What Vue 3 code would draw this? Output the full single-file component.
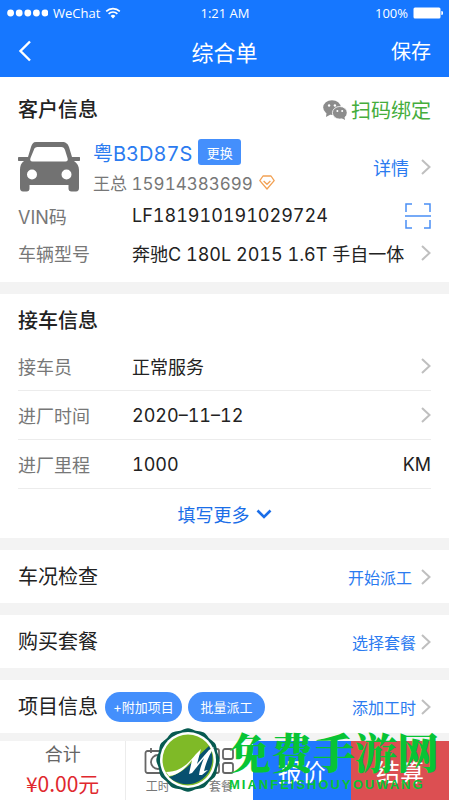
<template>
  <div class="page">
    <header class="header">
      <div class="status-bar">
        <div class="status-left">
          <svg class="signal" viewBox="0 0 41 8">
            <circle v-for="n in 5" :key="n" :cx="n * 8.6 - 5" cy="4" r="3.4" fill="#fff" />
          </svg>
          <span>WeChat</span>
          <svg class="wifi" viewBox="0 0 16 12" fill="none" stroke="#fff" stroke-width="1.6">
            <path d="M1.2 4.4a9.6 9.6 0 0 1 13.6 0" />
            <path d="M3.6 6.9a6.2 6.2 0 0 1 8.8 0" />
            <path d="M8 11.4L5.6 9a3.4 3.4 0 0 1 4.8 0z" fill="#fff" stroke="none" />
          </svg>
        </div>
        <span>1:21 AM</span>
        <div class="status-right">
          <span>100%</span>
          <svg class="battery" viewBox="0 0 30 12" fill="#fff">
            <rect x="0.5" y="0.5" width="27" height="11" rx="1.5" />
            <path d="M28.3 4v4a2 2 0 0 0 0-4z" />
          </svg>
        </div>
      </div>
      <div class="nav-bar">
        <button class="back" type="button" aria-label="返回">
          <svg viewBox="0 0 14 22" fill="none" stroke="#fff" stroke-width="2.4">
            <path d="M12 1.5L2.5 11l9.5 9.5" />
          </svg>
        </button>
        <h1>综合单</h1>
        <button class="save" type="button">保存</button>
      </div>
    </header>

    <main class="content">
      <section class="card customer">
        <div class="card-head">
          <h2>客户信息</h2>
          <button class="bind" type="button">
            <svg viewBox="0 0 24 20">
              <ellipse cx="9" cy="7.6" rx="8.8" ry="7.4" fill="#8c8c8c" />
              <path d="M3.6 12.4L3 17l4.6-2.4z" fill="#8c8c8c" />
              <circle cx="6.1" cy="5.5" r="1.2" fill="#fff" />
              <circle cx="11.9" cy="5.5" r="1.2" fill="#fff" />
              <ellipse cx="16.8" cy="12.8" rx="7.4" ry="6.3" fill="#8c8c8c" stroke="#fff" stroke-width="0.8" />
              <path d="M18.4 18l3.7 2-.8-3.6z" fill="#8c8c8c" />
              <circle cx="14.4" cy="11" r="1" fill="#fff" />
              <circle cx="19.2" cy="11" r="1" fill="#fff" />
            </svg>
            <span>扫码绑定</span>
          </button>
        </div>

        <div class="vehicle">
          <svg class="car" viewBox="0 0 62 50">
            <path
              fill="#727272"
              fill-rule="evenodd"
              d="M18 0h26c4 0 6 2 7 5l3 10h7c1 0 1 .6 1 1v2c0 .7-.3 1-1 1h-5c3 2 5 5 5 9v18c0 2-1 3.500-3 3.500h-4.500c-2 0-3-1-3-3V43h-39v3.500c0 2-1 3-3 3H5c-2 0-3-1.500-3-3.500V28c0-4 1-7 4-9H1c-.7 0-1-.3-1-1v-2c0-.4.300-1 1-1h9l3-10c1-3 2-5 5-5zM19.500 5c-2 0-3 .8-3.700 3L12.500 16c-.8 2 0 3.500 2 3.500h33c2 0 2.800-1.500 2-3.500L47 8c-.7-2-1.700-3-3.700-3zM14 27.500a5 5 0 1 0 0 10 5 5 0 0 0 0-10zM48.500 27.500a5 5 0 1 0 0 10 5 5 0 0 0 0-10z"
            />
          </svg>
          <div class="vehicle-info">
            <div class="plate">
              <strong>粤B3D87S</strong>
              <button class="swap" type="button">更换</button>
            </div>
            <div class="owner">
              <span>王总 15914383699</span>
              <svg viewBox="0 0 16 15" fill="none" stroke="#f2a154" stroke-width="1.300" stroke-linejoin="round">
                <path d="M4 1h8l3.200 4.600L8 14 .8 5.600z" />
                <path d="M4.600 6L8 9.200 11.400 6" />
              </svg>
            </div>
          </div>
          <a class="link detail" href="#">
            <span>详情</span>
            <svg class="arrow" viewBox="0 0 10 16"><path d="M1 1l7.500 7L1 15" /></svg>
          </a>
        </div>

        <div class="row short">
          <label for="vin">VIN码</label>
          <input id="vin" v-model="vin" type="text" />
          <button class="scan" type="button" aria-label="扫描">
            <svg viewBox="0 0 26 26" fill="none" stroke="#4a8ff5" stroke-width="1.500">
              <path d="M1 9V1h6M19 1h6v8M1 17v8h6M19 25h6v-8M0 13h26" />
            </svg>
          </button>
        </div>
        <button class="row short" type="button">
          <span class="label">车辆型号</span>
          <span class="value">奔驰C 180L 2015 1.6T 手自一体</span>
          <svg class="arrow" viewBox="0 0 10 16"><path d="M1 1l7.500 7L1 15" /></svg>
        </button>
      </section>

      <section class="card reception">
        <div class="card-head">
          <h2>接车信息</h2>
        </div>
        <button v-for="item in reception" :key="item.label" class="row lined" type="button">
          <span class="label">{{ item.label }}</span>
          <span class="value">{{ item.value }}</span>
          <svg class="arrow" viewBox="0 0 10 16"><path d="M1 1l7.500 7L1 15" /></svg>
        </button>
        <div class="row lined">
          <label for="mileage">进厂里程</label>
          <input id="mileage" v-model="mileage" type="text" inputmode="numeric" />
          <span>KM</span>
        </div>
        <button class="more" type="button">
          <span>填写更多</span>
          <svg viewBox="0 0 16 10" fill="none" stroke="#1a6ee8" stroke-width="2.600">
            <path d="M1.500 1.500L8 8l6.500-6.500" />
          </svg>
        </button>
      </section>

      <section v-for="entry in entries" :key="entry.title" class="card entry">
        <h2>{{ entry.title }}</h2>
        <div class="tags">
          <button v-for="tag in entry.tags" :key="tag" class="tag" type="button">{{ tag }}</button>
        </div>
        <a class="link" :class="{ spaced: entry.spaced }" href="#">
          <span>{{ entry.action }}</span>
          <svg class="arrow" viewBox="0 0 10 16"><path d="M1 1l7.500 7L1 15" /></svg>
        </a>
      </section>
    </main>

    <footer class="footer">
      <div class="total">
        <span>合计</span>
        <span class="price">¥0.00元</span>
      </div>
      <div class="shortcuts">
        <button type="button">
          <svg viewBox="0 0 28 28" fill="none" stroke="#666" stroke-width="1.800">
            <rect x="1.500" y="4" width="25" height="22" rx="2" />
            <path d="M7 1v5M21 1v5" />
            <circle cx="14" cy="15" r="7" />
            <path d="M14 11v4h4" />
          </svg>
          <span>工时</span>
        </button>
        <button type="button">
          <svg viewBox="0 0 28 28" fill="none" stroke="#666" stroke-width="1.800">
            <rect x="2" y="2" width="10" height="10" rx="2" />
            <rect x="16" y="2" width="10" height="10" rx="2" />
            <rect x="2" y="16" width="10" height="10" rx="2" />
            <rect x="16" y="16" width="10" height="10" rx="2" />
          </svg>
          <span>套餐</span>
        </button>
      </div>
      <button class="action quote" type="button">报价</button>
      <button class="action settle" type="button">结算</button>

      <div class="watermark">
        <svg class="badge" viewBox="0 0 64 64">
          <path :d="badgeEdge" fill="#075a50" />
          <circle cx="32" cy="32" r="28" fill="#fff" />
          <circle cx="32" cy="32" r="25.500" fill="#7fba27" />
          <path d="M13 48.900C29 45 38 31 53 18a25.500 25.500 0 0 1-40 30.900z" fill="#07506f" />
          <path
            d="M10 44c14 0 22-8 30-18l5-5-4 15 12-14 5-3c-4 7-8 15-10 24l4-1-6 5-3 0c1-7 3-12 5-17L36 45l-3 1 3-14c-6 8-13 15-23 16z"
            fill="#fff"
          />
        </svg>
        <div class="brand">
          <span class="brand-name">免费手游网</span>
          <span class="brand-latin">MIANFEISHOUYOUWANG</span>
        </div>
      </div>
    </footer>
  </div>
</template>

<script setup>
import { ref } from 'vue'

const vin = ref('LF181910191029724')
const mileage = ref('1000')

const reception = [
  { label: '接车员', value: '正常服务' },
  { label: '进厂时间', value: '2020–11–12' }
]

const entries = [
  { title: '车况检查', action: '开始派工', tags: [], spaced: true },
  { title: '购买套餐', action: '选择套餐', tags: [] },
  { title: '项目信息', action: '添加工时', tags: ['+附加项目', '批量派工'] }
]

// scalloped outline of the badge
const points = Array.from({ length: 120 }, (_, i) => {
  const angle = (i / 120) * Math.PI * 2
  const r = 31 + Math.cos(angle * 12) * 0.7
  return `${(32 + r * Math.cos(angle)).toFixed(1)} ${(32 + r * Math.sin(angle)).toFixed(1)}`
})
const badgeEdge = `M${points.join('L')}z`
</script>

<style>
body {
  margin: 0;
  background: #f3f3f3;
}
</style>

<style scoped>
.page {
  display: flex;
  flex-direction: column;
  min-height: 100vh;
  background: #f3f3f3;
  color: #222;
  font-family: Inter, 'Noto Sans CJK SC', sans-serif;
  font-size: 18px;
  font-variant-numeric: tabular-nums;
}

button,
input {
  margin: 0;
  padding: 0;
  border: 0;
  background: none;
  color: inherit;
  font: inherit;
  font-variant-numeric: inherit;
}

button {
  cursor: pointer;
}

a {
  text-decoration: none;
}

h1,
h2 {
  margin: 0;
  font-weight: 400;
}

svg {
  display: block;
  flex: none;
}

.header {
  background: #1677ff;
  color: #fff;
}

.status-bar {
  display: grid;
  grid-template-columns: 1fr auto 1fr;
  align-items: center;
  height: 26px;
  padding: 0 6px 0 7px;
  font-family: 'Open Sans', sans-serif;
  font-size: 13px;
}

.status-left,
.status-right {
  display: flex;
  align-items: center;
  gap: 5px;
}

.status-right {
  justify-content: flex-end;
}

.signal {
  width: 41px;
  height: 8px;
}

.wifi {
  width: 16px;
  height: 12px;
}

.battery {
  width: 30px;
  height: 12px;
}

.nav-bar {
  display: grid;
  grid-template-columns: 1fr auto 1fr;
  align-items: center;
  height: 51px;
  padding: 0 18px;
  box-sizing: border-box;
  padding-bottom: 2px;
}

.back {
  justify-self: start;
}

.back svg {
  width: 14px;
  height: 22px;
}

h1 {
  font-size: 22px;
}

.save {
  justify-self: end;
  font-size: 20px;
}

.content {
  display: flex;
  flex-direction: column;
  gap: 12px;
  flex: 1;
  padding-bottom: 8px;
}

.card {
  padding: 0 18px;
  background: #fff;
}

.card-head {
  display: flex;
  align-items: center;
  justify-content: space-between;
}

h2 {
  font-size: 20px;
  line-height: 30px;
}

.card-head h2 {
  font-weight: 500;
}

.customer {
  padding-bottom: 11px;
}

.customer .card-head {
  height: 55px;
  padding-top: 5px;
}

.bind {
  display: flex;
  align-items: center;
  gap: 4px;
  color: #45ad3c;
  font-size: 20px;
}

.bind svg {
  width: 24px;
  height: 20px;
}

.vehicle {
  display: flex;
  align-items: center;
  height: 60px;
}

.car {
  width: 62px;
  height: 50px;
}

.vehicle-info {
  flex: 1;
  margin-left: 13px;
}

.plate,
.owner {
  display: flex;
  align-items: center;
  gap: 6px;
  height: 30px;
}

.plate strong {
  color: #2b7bf0;
  font-size: 20px;
  font-weight: 400;
}

.swap {
  width: 43px;
  height: 26px;
  border-radius: 3px;
  background: #448ffc;
  color: #fff;
  font-size: 13px;
}

.owner {
  color: #777;
  font-size: 17px;
}

.owner svg {
  width: 16px;
  height: 15px;
}

.link {
  display: flex;
  align-items: center;
  gap: 5px;
  color: #2b7bf0;
  font-size: 16px;
}

.link.spaced {
  gap: 9px;
}

.link.detail {
  gap: 12px;
  font-size: 18px;
}

.arrow {
  width: 10px;
  height: 16px;
  fill: none;
  stroke: #bfbfbf;
  stroke-width: 2;
}

.row {
  display: flex;
  align-items: center;
  box-sizing: border-box;
  width: 100%;
  height: 49px;
  text-align: left;
}

.row.short {
  height: 37px;
}

.row.lined {
  border-bottom: 1px solid #ececec;
}

.row label,
.label {
  flex: none;
  width: 114px;
  color: #777;
}

.row input,
.value {
  flex: 1;
  min-width: 0;
  white-space: nowrap;
}

.row input {
  outline: none;
}

.scan svg {
  width: 26px;
  height: 26px;
}

.reception .card-head {
  height: 42px;
  padding-top: 6px;
}

.more {
  display: flex;
  align-items: center;
  justify-content: center;
  gap: 6px;
  width: 100%;
  height: 49px;
  color: #1a6ee8;
}

.more svg {
  width: 16px;
  height: 10px;
}

.entry {
  display: flex;
  align-items: center;
  gap: 7px;
  height: 53px;
}

.tags {
  display: flex;
  flex: 1;
  gap: 6px;
}

.tag {
  min-width: 77px;
  height: 30px;
  padding: 0 6px;
  border-radius: 15px;
  background: #448ffc;
  color: #fff;
  font-size: 13px;
}

.footer {
  position: sticky;
  bottom: 0;
  display: grid;
  grid-template-columns: 9fr 9fr 7fr 7fr;
  height: 59px;
  background: #fff;
}

.total {
  display: flex;
  flex-direction: column;
  align-items: center;
  border-right: 1px solid #ececec;
  color: #666;
  line-height: 28px;
}

.price {
  color: #e0282e;
  font-family: 'Noto Sans CJK SC', sans-serif;
  font-size: 21px;
}

.shortcuts {
  display: grid;
  grid-template-columns: 1fr 1fr;
}

.shortcuts button {
  display: flex;
  flex-direction: column;
  align-items: center;
  justify-content: center;
  gap: 4px;
  color: #777;
  font-size: 12px;
  line-height: 16px;
}

.shortcuts svg {
  width: 28px;
  height: 28px;
}

.action {
  color: #fff;
  font-size: 24px;
}

.quote {
  background: #1f78ff;
}

.settle {
  background: #dc4f52;
}

.watermark {
  position: absolute;
  top: -13px;
  left: 156px;
  display: flex;
  gap: 9px;
  pointer-events: none;
}

.badge {
  width: 64px;
  height: 64px;
}

.brand {
  display: flex;
  flex-direction: column;
  color: #08c435;
  white-space: nowrap;
}

.brand-name {
  font-family: 'Noto Serif CJK SC', 'Noto Sans CJK SC', serif;
  font-size: 42px;
  font-weight: 900;
  line-height: 46px;
}

.brand-latin {
  font-family: 'Liberation Sans', sans-serif;
  font-size: 13px;
  font-weight: 700;
  letter-spacing: 2px;
  line-height: 22px;
}
</style>
